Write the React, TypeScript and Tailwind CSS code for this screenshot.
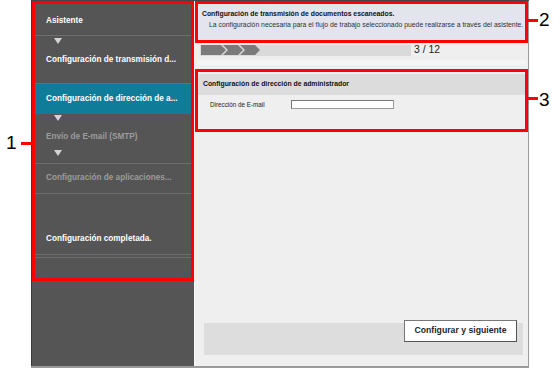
import React from 'react';

const Tri = ({ className = '' }: { className?: string }) => (
  <div className={'ml-[22px] w-0 h-0 border-l-[4px] border-r-[4px] border-t-[6px] border-l-transparent border-r-transparent border-t-[#d4d4d4] ' + className}></div>
);

const Chevrons = () => (
  <svg width="60" height="10" viewBox="0 0 60 10" className="block">
    <polygon points="0,0 20,0 25,5 20,10 0,10" fill="#7a7a7a" />
    <polygon points="22,0 37,0 42,5 37,10 22,10 27,5" fill="#7a7a7a" />
    <polygon points="39,0 54,0 59,5 54,10 39,10 44,5" fill="#7a7a7a" />
  </svg>
);

export default function App() {
  return (
    <div className="relative w-[560px] h-[369px] bg-white font-['Liberation_Sans',Arial,sans-serif] overflow-hidden">
      <div className="flex h-full pl-[31px]">
        {/* ventana */}
        <div className="flex w-[498px] h-[368px] border-t border-[#444] border-b-2 border-b-[#9a9a9a]">
          {/* Barra lateral */}
          <div className="w-[163px] bg-[#555555] border-l border-l-[#3c3c3c] flex flex-col text-[8.2px] font-bold leading-[10px]">
            <div className="h-[35px] pt-[15px] pl-[14px] text-white border-b border-[#6e6e6e]">Asistente</div>
            <div className="h-[48px] border-b border-[#6e6e6e] pt-[2px]">
              <Tri />
              <div className="pl-[14px] mt-[11px] text-white">Configuración de transmisión d...</div>
            </div>
            <div className="h-[30px] bg-[#0f7d9a] pt-[10px] pl-[14px] text-white">Configuración de dirección de a...</div>
            <div className="h-[50px] border-b border-[#6e6e6e] pt-[1px]">
              <Tri />
              <div className="pl-[14px] mt-[11px] text-[#9c9c9c]">Envío de E-mail (SMTP)</div>
              <Tri className="mt-[8px]" />
            </div>
            <div className="h-[30px] border-b border-[#6e6e6e] pt-[9px] pl-[14px] text-[#9c9c9c]">Configuración de aplicaciones...</div>
            <div className="h-[61px] border-b border-[#6e6e6e] pt-[40px] pl-[14px] text-white">Configuración completada.</div>
            <div className="h-[3px] border-b border-[#6e6e6e]"></div>
            <div className="flex-1"></div>
          </div>

          {/* Panel principal */}
          <div className="flex-1 bg-[#efefef] border-l border-l-[#f6f6f6] border-r border-r-[#9a9a9a] flex flex-col">
            <div className="mx-[2px] h-[41px] bg-[#e4e4ee] pt-[8px]">
              <div className="pl-[5px] text-[6.85px] font-bold leading-[9px] text-[#111]">Configuración de transmisión de documentos escaneados.</div>
              <div className="pl-[12px] mt-[2px] text-[6.85px] leading-[9px] text-[#2f2f3a]">La configuración necesaria para el flujo de trabajo seleccionado puede realizarse a través del asistente.</div>
            </div>
            <div className="flex items-center mt-[2px] pl-[5px] h-[12px]">
              <div className="w-[211px] h-[11px] bg-[#dadada] flex items-center pl-[1px]">
                <Chevrons />
              </div>
              <div className="ml-[3px] text-[10.4px] leading-[12px] text-[#222]">3 / 12</div>
            </div>
            <div className="mt-[4px] mx-[2px] h-[5px] bg-[#f5f5f5]"></div>
            <div className="mx-[3px] mt-[9px]">
              <div className="h-[21px] bg-[#dcdcdc] pl-[5px] flex items-center text-[6.85px] font-bold text-[#111]">Configuración de dirección de administrador</div>
              <div className="h-[36px] flex items-start pt-[5px]">
                <div className="w-[93px] pl-[12px] text-[6.3px] leading-[9px] text-[#222]">Dirección de E-mail</div>
                <div className="w-[103px] h-[9px] bg-white border border-[#999] border-t-[#777] border-l-[#777]"></div>
              </div>
            </div>
            <div className="flex-1"></div>
            <div className="ml-[9px] mr-[5px] mb-[11px] h-[32px] bg-[#dddddd] flex justify-end pr-[6px]">
              <div className="-mt-[3px] w-[113px] h-[22px] bg-white border border-[#777] border-b-[#555] border-r-[#555] flex items-center justify-center text-[8.7px] font-bold text-[#1f1f1f]">Configurar y siguiente</div>
            </div>
          </div>
        </div>
      </div>

      {/* Anotaciones */}
      <div className="absolute left-[32px] top-[1px] w-[162px] h-[280px] border-[3px] border-[#ff0000]"></div>
      <div className="absolute left-[195px] top-[1px] w-[333px] h-[42px] border-[3px] border-[#ff0000]"></div>
      <div className="absolute left-[195px] top-[69px] w-[333px] h-[63px] border-[3px] border-[#ff0000]"></div>

      <div className="absolute left-[21px] top-[142px] w-[11px] h-[3px] bg-[#ff0000]"></div>
      <div className="absolute left-[6px] top-[133px] text-[19px] leading-[19px] text-black">1</div>
      <div className="absolute left-[528px] top-[19px] w-[10px] h-[3px] bg-[#ff0000]"></div>
      <div className="absolute left-[539px] top-[10px] text-[19px] leading-[19px] text-black">2</div>
      <div className="absolute left-[528px] top-[97px] w-[10px] h-[3px] bg-[#ff0000]"></div>
      <div className="absolute left-[539px] top-[90px] text-[19px] leading-[19px] text-black">3</div>
    </div>
  );
}
